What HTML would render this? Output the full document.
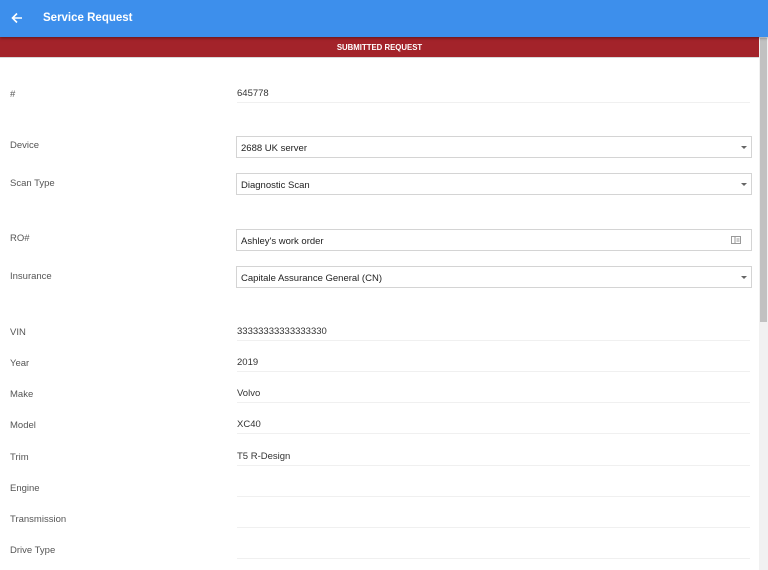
<!DOCTYPE html>
<html><head><meta charset="utf-8"><style>
*{margin:0;padding:0;box-sizing:border-box}
body{width:768px;height:570px;overflow:hidden;background:#fff;font-family:"Liberation Sans",sans-serif;position:relative;color:#333}
.hdr{position:absolute;left:0;top:0;width:768px;height:37px;background:#3d8fec;box-shadow:0 1px 3px rgba(0,0,0,.4);z-index:2}
.hdr .t{position:absolute;left:43px;top:12px;color:#fff;font-weight:bold;font-size:11.5px}
.ban{position:absolute;left:0;top:37px;width:759px;height:21px;background:#a3232a;color:#fff;font-size:7.8px;font-weight:bold;text-align:center;line-height:21px;border-bottom:1px solid #d9d9d9}
.sb{position:absolute;left:759px;top:37px;width:9px;height:533px;background:#f1f1f1}
.sb div{position:absolute;left:1px;top:1px;width:7px;height:284px;background:#c1c1c1}
.l{position:absolute;left:10px;font-size:9.5px;color:#555}
.v{position:absolute;left:237px;font-size:9.5px;color:#333;width:513px;border-bottom:1px solid #f0f0f0;height:12px}
.v span{position:relative;top:-3px}
.box{position:absolute;left:236px;width:516px;height:22px;border:1px solid #d4d4d4;font-size:9.5px;color:#222;padding:6px 0 0 4px}
.box .ar{position:absolute;right:4px;top:9px;width:0;height:0;border-left:3px solid transparent;border-right:3px solid transparent;border-top:3px solid #666}
</style></head><body>
<div class="hdr">
<svg style="position:absolute;left:11px;top:12px" width="12" height="12" viewBox="0 0 12 12"><path d="M11 6H2M6 1.5L1.5 6 6 10.5" stroke="#fff" stroke-width="1.6" fill="none"/></svg>
<div class="t">Service Request</div></div>
<div class="ban">SUBMITTED REQUEST</div>
<div class="sb"><div></div></div>

<div class="l" style="top:89px">#</div>
<div class="v" style="top:91px"><span>645778</span></div>

<div class="l" style="top:140px">Device</div>
<div class="box" style="top:136px">2688 UK server<div class="ar"></div></div>
<div class="l" style="top:178px">Scan Type</div>
<div class="box" style="top:173px">Diagnostic Scan<div class="ar"></div></div>
<div class="l" style="top:233px">RO#</div>
<div class="box" style="top:229px">Ashley's work order
<svg style="position:absolute;right:10px;top:6px" width="10" height="8" viewBox="0 0 10 8"><rect x=".5" y=".5" width="9" height="7" fill="none" stroke="#999"/><path d="M4 1v6M5.5 3h3M5.5 5h3" stroke="#999"/></svg></div>
<div class="l" style="top:271px">Insurance</div>
<div class="box" style="top:266px">Capitale Assurance General (CN)<div class="ar"></div></div>

<div class="l" style="top:327px">VIN</div><div class="v" style="top:329px"><span>33333333333333330</span></div>
<div class="l" style="top:358px">Year</div><div class="v" style="top:360px"><span>2019</span></div>
<div class="l" style="top:389px">Make</div><div class="v" style="top:391px"><span>Volvo</span></div>
<div class="l" style="top:420px">Model</div><div class="v" style="top:422px"><span>XC40</span></div>
<div class="l" style="top:452px">Trim</div><div class="v" style="top:454px"><span>T5 R-Design</span></div>
<div class="l" style="top:483px">Engine</div><div class="v" style="top:485px"></div>
<div class="l" style="top:514px">Transmission</div><div class="v" style="top:516px"></div>
<div class="l" style="top:545px">Drive Type</div><div class="v" style="top:547px"></div>
</body></html>
